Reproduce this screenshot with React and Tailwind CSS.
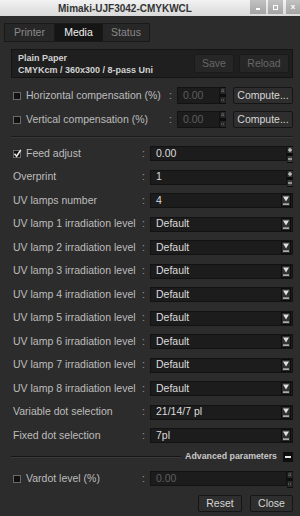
import React from 'react';

const Check = ({ checked }) => (
  <span className="relative w-[8px] h-[8px] border border-[#6a6a6a] bg-[#111] shrink-0">
    {checked && (
      <svg width="9" height="9" viewBox="0 0 9 9" className="absolute left-[-1px] top-[-2px]">
        <path d="M1.5 4.8 L3.6 7.2 L7.8 1" stroke="#e6e6e6" strokeWidth="1.6" fill="none" />
      </svg>
    )}
  </span>
);

const Spin = ({ disabled }) => (
  <svg width="6" height="17" viewBox="0 0 6 17" className="shrink-0 self-stretch">
    <rect x="0" y="0" width="6" height="17" fill="#0d0d0d" />
    <rect x="0.5" y="1" width="5" height="6" fill={disabled ? '#2a2a2a' : '#3c3c3c'} />
    <rect x="0.5" y="10" width="5" height="6" fill={disabled ? '#2a2a2a' : '#3c3c3c'} />
    <path d="M1 4 H5 M3 2 V6" stroke={disabled ? '#777' : '#e8e8e8'} strokeWidth="1" strokeDasharray={disabled ? '1 1' : undefined} />
    <path d="M1 13 H5" stroke={disabled ? '#777' : '#e8e8e8'} strokeWidth="1" strokeDasharray={disabled ? '1 1' : undefined} />
  </svg>
);

const Arrow = () => (
  <svg width="10" height="13" viewBox="0 0 10 13" className="shrink-0">
    <rect x="0.5" y="0.5" width="9" height="12" fill="#2f2f2f" stroke="#0c0c0c" />
    <polygon points="2,2.5 8,2.5 5,7.5" fill="#e0e0e0" />
    <rect x="2" y="9.5" width="6" height="1.2" fill="#e0e0e0" />
  </svg>
);

const Btn = ({ children, disabled, className }) => (
  <div
    className={`flex items-center justify-center border rounded-[2px] text-[10.5px] ${
      disabled ? 'bg-[#262626] border-[#1a1a1a] text-[#676767]' : 'bg-[#2e2e2e] border-[#151515] text-[#d6d6d6]'
    } ${className}`}
  >
    {children}
  </div>
);

const Label = ({ text, checkbox, checked, w }) => (
  <div className={`flex items-center gap-[5px] ${w} text-[10.5px] text-[#bdbdbd] whitespace-nowrap`}>
    {checkbox && <Check checked={checked} />}
    <span>{text}</span>
  </div>
);

const Colon = () => <div className="w-[13px] text-center text-[10.5px] text-[#9a9a9a]">:</div>;

const SpinRow = ({ label, value, checkbox, checked, disabled }) => (
  <div className="flex items-center h-[15px] pl-[2px]">
    <Label text={label} checkbox={checkbox} checked={checked} w="w-[124px]" />
    <Colon />
    <div className="flex flex-1 h-full">
      <div
        className={`flex-1 flex items-center pl-[5px] bg-[#1c1c1c] border border-[#121212] text-[10.5px] ${
          disabled ? 'text-[#5e5e5e]' : 'text-[#dcdcdc]'
        }`}
      >
        {value}
      </div>
      <Spin disabled={disabled} />
    </div>
  </div>
);

const ComboRow = ({ label, value }) => (
  <div className="flex items-center h-[15px] pl-[2px]">
    <Label text={label} w="w-[124px]" />
    <Colon />
    <div className="flex flex-1 h-full items-center pl-[5px] pr-[1px] bg-[#1c1c1c] border border-[#121212]">
      <span className="flex-1 text-[10.5px] text-[#dcdcdc]">{value}</span>
      <Arrow />
    </div>
  </div>
);

const CompRow = ({ label }) => (
  <div className="flex items-center h-[17px] pl-[2px]">
    <Label text={label} checkbox w="w-[151px]" />
    <Colon />
    <div className="flex h-full w-[49px]">
      <div className="flex-1 flex items-center pl-[5px] bg-[#1c1c1c] border border-[#121212] text-[10.5px] text-[#5e5e5e]">
        0.00
      </div>
      <Spin disabled />
    </div>
    <Btn className="ml-[7px] w-[60px] h-full">Compute...</Btn>
  </div>
);

const lamps = [1, 2, 3, 4, 5, 6, 7, 8];

export default function App() {
  return (
    <div className="w-[300px] h-[516px] overflow-hidden bg-[#2c2c2c] font-['Liberation_Sans',Arial,sans-serif] flex flex-col">
      {/* title bar */}
      <div className="flex h-[16px] bg-gradient-to-b from-[#f2f2f2] to-[#d9d9d9] shrink-0">
        <div className="flex-1 flex items-center justify-center text-[10px] font-bold text-[#333]">
          Mimaki-UJF3042-CMYKWCL
        </div>
        <div className="flex gap-[1px] h-[14px]">
          <div className="w-[16px] bg-gradient-to-b from-[#c2c2c2] to-[#a4a4a4] flex items-end justify-center pb-[4px]">
            <div className="w-[4px] h-[2px] bg-white" />
          </div>
          <div className="w-[15px] bg-gradient-to-b from-[#c2c2c2] to-[#a4a4a4] flex items-center justify-center ml-[1px]">
            <div className="w-[5px] h-[5px] border border-white" />
          </div>
          <div className="w-[14px] ml-[2px] bg-gradient-to-b from-[#c2c2c2] to-[#a4a4a4] flex items-center justify-center text-white text-[8px] font-bold">
            x
          </div>
        </div>
      </div>

      {/* tabs */}
      <div className="ml-[4px] mt-[7px] flex h-[19px] w-[146px] bg-[#272727] border border-[#191919]">
        <div className="w-[50px] flex items-center justify-center text-[10.5px] text-[#8a8a8a] border-r border-[#191919]">Printer</div>
        <div className="w-[47px] flex items-center justify-center text-[10.5px] text-[#f0f0f0] bg-[#151515]">Media</div>
        <div className="flex-1 flex items-center justify-center text-[10.5px] text-[#8a8a8a] border-l border-[#191919]">Status</div>
      </div>

      <div className="ml-[11px] mr-[7px] flex flex-col">
        {/* media */}
        <div className="mt-[7px] h-[29px] flex items-center bg-[#1f1f1f] border border-[#141414] pl-[6px] pr-[3px]">
          <div className="flex-1 flex flex-col leading-[12px] text-[9px] font-bold text-[#d2d2d2]">
            <span>Plain Paper</span>
            <span>CMYKcm / 360x300 / 8-pass Uni</span>
          </div>
          <Btn disabled className="w-[40px] h-[19px]">Save</Btn>
          <Btn disabled className="ml-[5px] w-[50px] h-[19px]">Reload</Btn>
        </div>

        <div className="mt-[9px] flex flex-col gap-[7px]">
          <CompRow label="Horizontal compensation (%)" />
          <CompRow label="Vertical compensation (%)" />
        </div>

        <div className="mt-[8px] h-[2px] border-t border-[#1a1a1a] border-b border-b-[#383838]" />

        <div className="mt-[8px] flex flex-col gap-[8.5px]">
          <SpinRow label="Feed adjust" value="0.00" checkbox checked />
          <SpinRow label="Overprint" value="1" />
          <ComboRow label="UV lamps number" value="4" />
          {lamps.map((n) => (
            <ComboRow key={n} label={`UV lamp ${n} irradiation level`} value="Default" />
          ))}
          <ComboRow label="Variable dot selection" value="21/14/7 pl" />
          <ComboRow label="Fixed dot selection" value="7pl" />
        </div>

        {/* advanced */}
        <div className="mt-[9px] flex items-center h-[10px]">
          <div className="flex-1 h-[2px] border-t border-[#161616] border-b border-b-[#3a3a3a]" />
          <span className="ml-[4px] text-[8.8px] font-bold text-[#c8c8c8]">Advanced parameters</span>
          <div className="ml-[6px] w-[10px] h-[10px] bg-[#0e0e0e] flex items-center justify-center">
            <div className="w-[6px] h-[2px] bg-[#e8e8e8]" />
          </div>
        </div>

        <div className="mt-[9px]">
          <SpinRow label="Vardot level (%)" value="0.00" checkbox disabled />
        </div>

        <div className="mt-[9px] flex justify-end gap-[8px]">
          <Btn className="w-[44px] h-[17px]">Reset</Btn>
          <Btn className="w-[43px] h-[17px]">Close</Btn>
        </div>
      </div>
    </div>
  );
}
